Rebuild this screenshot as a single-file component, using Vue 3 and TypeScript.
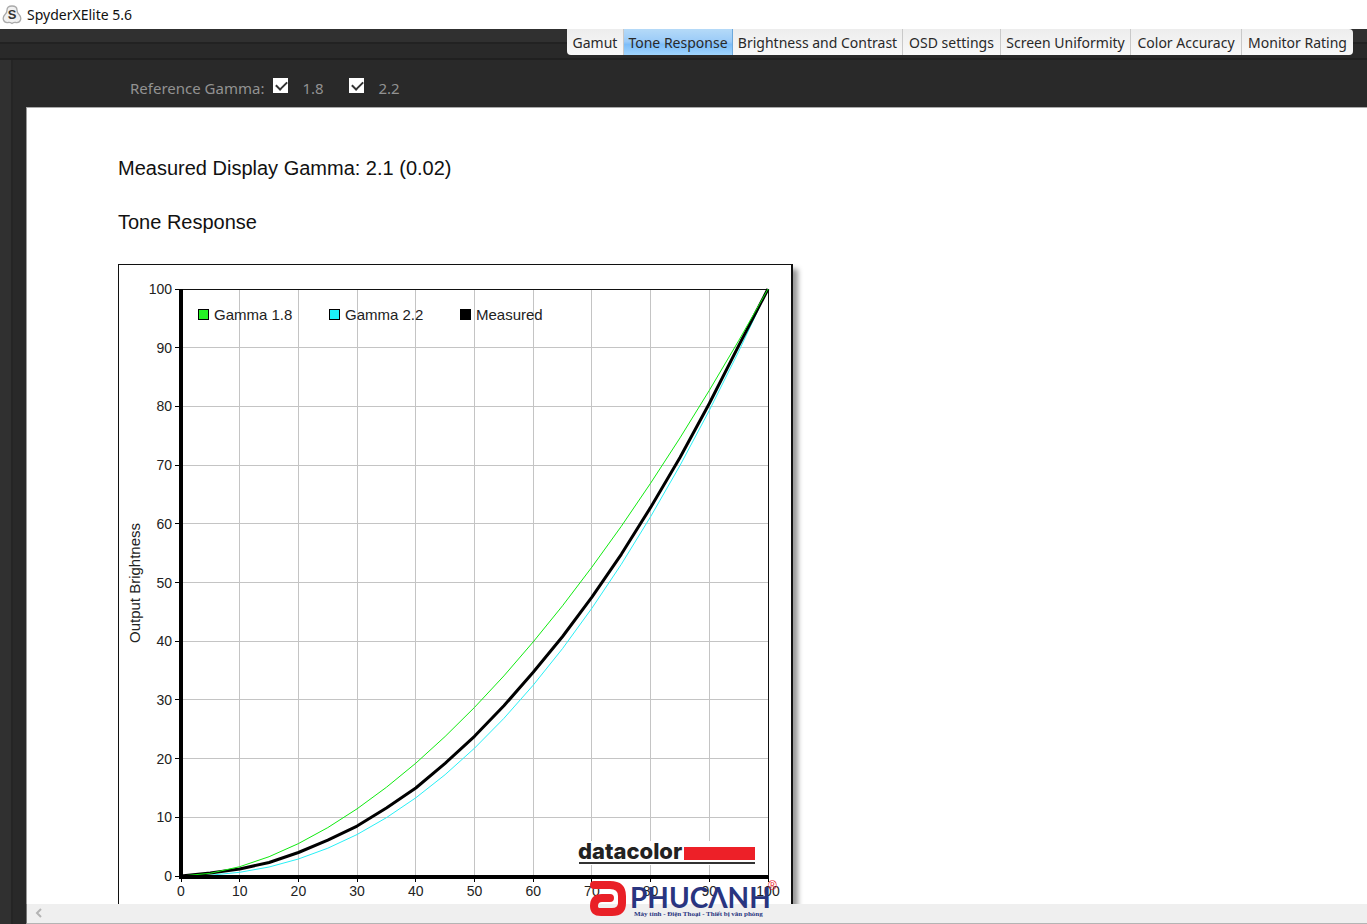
<script setup lang="ts">
import { ref } from 'vue'

const tabs = ['Gamut', 'Tone Response', 'Brightness and Contrast', 'OSD settings', 'Screen Uniformity', 'Color Accuracy', 'Monitor Rating']
const active = ref('Tone Response')
const show18 = ref(true)
const show22 = ref(true)

const ticks = Array.from({ length: 11 }, (_, i) => i * 10)
const px = (v: number) => 62 + (v * 587) / 100
const py = (v: number) => 611 - (v * 587) / 100

function line(points: [number, number][]): string {
  return points.map(([x, y]) => `${px(x).toFixed(1)},${py(y).toFixed(1)}`).join(' ')
}
function gammaLine(gamma: number): string {
  return line(Array.from({ length: 21 }, (_, i) => [i * 5, 100 * Math.pow(i / 20, gamma)] as [number, number]))
}
const measured = line([
  [0, 0], [5, 0.5], [10, 1.2], [15, 2.3], [20, 4], [25, 6.1], [30, 8.5], [35, 11.6], [40, 15], [45, 19.2],
  [50, 23.8], [55, 29], [60, 34.7], [65, 40.8], [70, 47.5], [75, 54.8], [80, 62.8], [85, 71.3], [90, 80.5], [95, 90.3], [100, 100],
])
const legend = [
  { label: 'Gamma 1.8', color: '#24f224', x: 79 },
  { label: 'Gamma 2.2', color: '#1cf2f8', x: 210 },
  { label: 'Measured', color: '#000', x: 341 },
]
</script>

<template>
  <div class="window">
    <header class="titlebar">
      <svg class="app-icon" width="20" height="20" viewBox="0 0 20 20" aria-hidden="true">
        <path d="M5 5Q5 1 10 1Q15 1 15 5Q15 8 17 9.500Q19.500 12 18.500 15Q17.500 18 14 17.500Q12 17 10 18.500Q8 17 6 17.500Q2.500 18 1.500 15Q.5 12 3 9.500Q5 8 5 5Z" fill="#f1f1f1" stroke="#aaa" stroke-width="1.300" stroke-linejoin="round" />
        <text x="10" y="14" text-anchor="middle" class="icon-letter">S</text>
      </svg>
      <span>SpyderXElite 5.6</span>
    </header>
    <nav class="tabbar">
      <div class="tabs">
        <button v-for="tab in tabs" :key="tab" type="button" :class="{ active: tab === active }" @click="active = tab">{{ tab }}</button>
      </div>
    </nav>
    <main class="body">
      <div class="panel">
        <div class="options">
          <span>Reference Gamma:</span>
          <label><input v-model="show18" type="checkbox"><span>1.8</span></label>
          <label><input v-model="show22" type="checkbox"><span>2.2</span></label>
        </div>
        <section class="report">
          <h1>Measured Display Gamma: 2.1 (0.02)</h1>
          <h2>Tone Response</h2>
          <div class="chart">
            <svg width="672" height="670" viewBox="0 0 672 670" role="img" aria-label="Tone response chart">
              <g class="grid">
                <template v-for="t in ticks.slice(1, 10)" :key="t">
                  <line :x1="px(t)" :x2="px(t)" y1="24" y2="611" />
                  <line x1="62" x2="649" :y1="py(t)" :y2="py(t)" />
                </template>
              </g>
              <path d="M62 24H649V611" class="frame" />
              <g class="ticks">
                <template v-for="t in ticks" :key="t">
                  <line x1="56" x2="62" :y1="py(t)" :y2="py(t)" />
                  <line :x1="px(t)" :x2="px(t)" y1="611" y2="617" />
                  <text x="53" :y="py(t) + 5" text-anchor="end">{{ t }}</text>
                  <text :x="px(t)" y="631" text-anchor="middle">{{ t }}</text>
                </template>
              </g>
              <rect x="459" y="576" width="179" height="24" fill="#fff" />
              <polyline v-if="show22" :points="gammaLine(2.2)" class="cyan" />
              <polyline :points="measured" class="measured" />
              <polyline v-if="show18" :points="gammaLine(1.8)" class="green" />
              <path d="M62 24V612H649" class="axis" />
              <g v-for="item in legend" :key="item.label" class="legend">
                <rect :x="item.x" y="44" width="10" height="10" :fill="item.color" />
                <text :x="item.x + 16" y="55">{{ item.label }}</text>
              </g>
              <text class="axis-title" transform="translate(21 318) rotate(-90)" text-anchor="middle">Output Brightness</text>
              <text class="datacolor" x="459" y="594">datacolor</text>
              <rect x="565" y="582" width="71" height="13" fill="#ed2028" />
              <rect x="460" y="597" width="176" height="2" fill="#333" />
            </svg>
          </div>
        </section>
        <div class="scrollbar">
          <button type="button" aria-label="Scroll left">
            <svg width="8" height="10" viewBox="0 0 8 10"><path d="M6 1L2 5L6 9" fill="none" stroke="#b4b4b4" stroke-width="2" /></svg>
          </button>
        </div>
      </div>
    </main>
    <svg class="watermark" width="210" height="48" viewBox="0 0 210 48" role="img" aria-label="Phuc Anh">
      <path d="M17 9H33Q45 9 45 20V27Q45 36 35 36H24Q17 36 17 30Q17 22 25 22H33" class="mark" />
      <text x="53" y="32" class="brand">PHUCΛNH</text>
      <text x="57" y="40" class="tagline">Máy tính - Điện Thoại - Thiết bị văn phòng</text>
      <text x="191" y="14" class="registered">®</text>
    </svg>
  </div>
</template>

<style>
body { margin: 0; overflow: hidden; }
</style>
<style scoped>
* { box-sizing: border-box; }
.window { position: relative; height: 100vh; display: flex; flex-direction: column; background: #292929; font-family: "Noto Sans", sans-serif; }
.titlebar { flex: 0 0 29px; display: flex; align-items: center; gap: 5px; padding-left: 2px; background: #fff; color: #111; font-size: 14px; }
.icon-letter { font: bold 13px "Liberation Sans", sans-serif; fill: #333; }
.tabbar { flex: 0 0 31px; display: flex; justify-content: flex-end; align-items: flex-start; padding-right: 14px; background: linear-gradient(#303030 0 13px, #222 13px 15px, #292929 15px 29px, #202020 29px); }
.tabs { display: grid; grid-template-columns: 57px 109px 170px 98px 130px 111px 111px; height: 26px; border-radius: 0 4px 4px 4px; overflow: hidden; background: linear-gradient(#ededed, #f8f8f8); }
.tabs button { border: 0; border-right: 1px solid #c9c9c9; padding: 0; background: none; color: #292929; font: 14px/28px "Noto Sans", sans-serif; white-space: nowrap; }
.tabs button:last-child { border-right: 0; }
.tabs button.active { background: linear-gradient(#b5daf8, #9bcbf8 45%, #7dbdf8 55%, #a7d9ff); border-color: #6da9dc; }
.body { flex: 1; min-height: 0; display: flex; padding-left: 12px; background: linear-gradient(90deg, #303030 0 11px, #252525 11px 13px, #292929 13px); }
.panel { flex: 1; min-width: 0; display: flex; flex-direction: column; padding-left: 14px; }
.options { flex: 0 0 47px; display: flex; align-items: center; padding: 8px 0 0 104px; color: #929292; font-size: 15px; }
.options label { display: flex; align-items: center; margin-left: 9px; width: 67px; gap: 14px; }
.options input { appearance: none; width: 15px; height: 15px; margin: 0 0 4px; background: #fff; position: relative; }
.options input:checked::after { content: ""; position: absolute; left: 5px; top: 1px; width: 5px; height: 9px; border: solid #333; border-width: 0 2px 2px 0; transform: rotate(45deg); }
.report { flex: 1; min-height: 0; overflow: hidden; border-top: 1px solid #aaa; border-left: 1px solid #999; padding: 48px 0 0 91px; background: #fff; font-family: "Liberation Sans", Arial, sans-serif; color: #111; }
h1, h2 { margin: 0; font-size: 20px; line-height: 24px; font-weight: 400; }
h2 { margin-top: 30px; }
.chart { width: 675px; margin-top: 30px; border: 1px solid #111; border-right-width: 2px; box-shadow: 5px 5px 5px #999; background: #fff; }
.chart svg { display: block; font: 14px "Liberation Sans", Arial, sans-serif; fill: #222; }
.grid line { stroke: #c4c4c4; stroke-width: 1; shape-rendering: crispEdges; }
.frame { fill: none; stroke: #111; stroke-width: 1; shape-rendering: crispEdges; }
.axis { fill: none; stroke: #000; stroke-width: 4; shape-rendering: crispEdges; }
.ticks line { stroke: #000; shape-rendering: crispEdges; }
.cyan, .green, .measured { fill: none; stroke: #28f0f6; stroke-width: 1; }
.green { stroke: #10ea10; }
.measured { stroke: #000; stroke-width: 3; stroke-linejoin: round; }
.legend rect { stroke: #000; stroke-width: 1; shape-rendering: crispEdges; }
.legend text, .axis-title { font-size: 15px; }
.datacolor { font: 800 22px Inter, sans-serif; }
.scrollbar { flex: 0 0 20px; display: flex; align-items: center; background: #efefef; border-bottom: 1px solid #b4b4b4; border-left: 1px solid #777; }
.scrollbar button { width: 24px; height: 18px; border: 0; padding: 0; background: none; }
.watermark { position: absolute; left: 577px; bottom: 0; }
.mark { fill: none; stroke: #e92027; stroke-width: 8; stroke-linecap: round; stroke-linejoin: round; }
.brand { font: bold 28px Lato, sans-serif; fill: #293580; }
.tagline { font: bold 7px "Liberation Serif", serif; fill: #293580; }
.registered { font: 12px "Liberation Sans", sans-serif; fill: #e92027; }
</style>
